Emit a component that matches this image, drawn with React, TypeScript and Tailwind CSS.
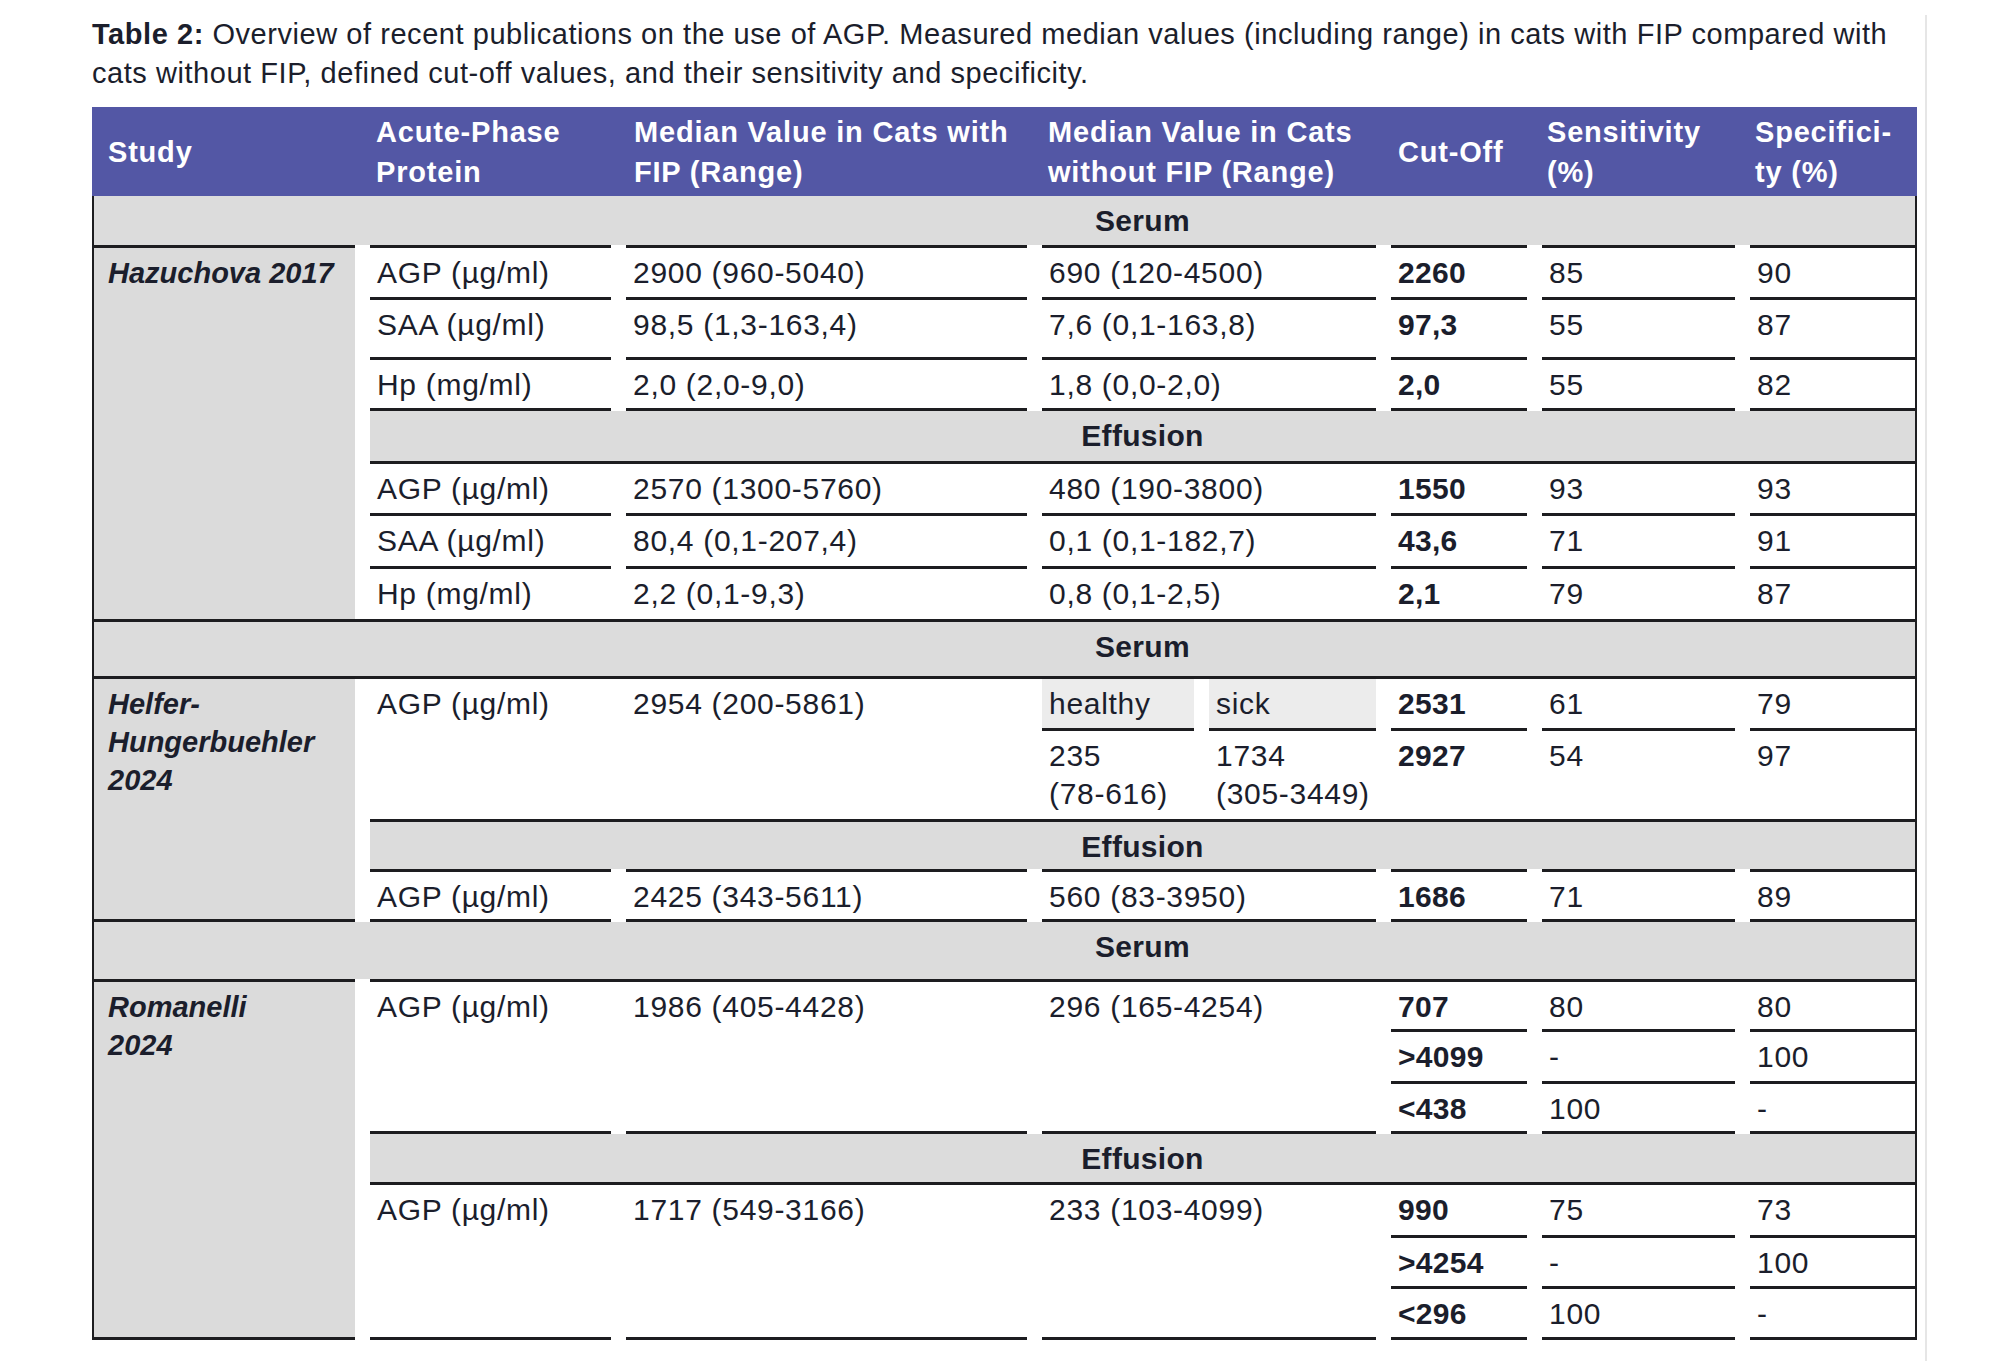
import React from 'react';

const rowGrid = 'grid grid-cols-[241px_401px_152px_167px_136px_193px_165px] gap-x-[15px]';
const ln = 'border-[#1d1d20]';

function Cell({ children, className = '' }: { children?: React.ReactNode; className?: string }) {
  return <div className={`pl-[7px] pt-[6px] ${className}`}>{children}</div>;
}

type RowProps = { h: string; values: string[]; top?: boolean; bottom?: boolean };

function DataRow({ h, values, top = false, bottom = true }: RowProps) {
  const b = `${top ? 'border-t-[3px]' : ''} ${bottom ? 'border-b-[3px]' : ''} ${ln}`;
  return (
    <div className={`${rowGrid} ${h}`}>
      <Cell className={b}>{values[0]}</Cell>
      <Cell className={b}>{values[1]}</Cell>
      <Cell className={`col-span-2 ${b}`}>{values[2]}</Cell>
      <Cell className={`font-bold tracking-[0.3px] ${b}`}>{values[3]}</Cell>
      <Cell className={b}>{values[4]}</Cell>
      <Cell className={b}>{values[5]}</Cell>
    </div>
  );
}

// gray band across the whole table, label centred over the data columns
function FullSection({ label, className = '' }: { label: string; className?: string }) {
  return (
    <div className={`flex bg-[#dcdcdc] ${className}`}>
      <div className="w-[276px] shrink-0" />
      <div className="flex-1 pt-[6px] text-center font-bold tracking-[0.3px]">{label}</div>
    </div>
  );
}

function Section({ label, className = '' }: { label: string; className?: string }) {
  return <div className={`bg-[#dcdcdc] pt-[6px] text-center font-bold tracking-[0.3px] ${className}`}>{label}</div>;
}

function Study({ children, className = '' }: { children: React.ReactNode; className?: string }) {
  return (
    <div className={`w-[261px] shrink-0 bg-[#dbdbdb] pl-[14px] pt-[6px] text-[29px] font-bold italic tracking-normal ${ln} ${className}`}>
      {children}
    </div>
  );
}

// three cut-off rows sharing one protein / median block
function CutoffGroup({ rows, heights, values }: { rows: string[][]; heights: string; values: string[] }) {
  const span = `row-span-3 border-b-[3px] ${ln}`;
  return (
    <div className={`${rowGrid} ${heights}`}>
      <Cell className={`row-start-1 col-start-1 ${span}`}>{values[0]}</Cell>
      <Cell className={`row-start-1 col-start-2 ${span}`}>{values[1]}</Cell>
      <Cell className={`row-start-1 col-start-3 col-span-2 ${span}`}>{values[2]}</Cell>
      {rows.map((r, i) => (
        <React.Fragment key={i}>
          <Cell className={`col-start-5 font-bold tracking-[0.3px] border-b-[3px] ${ln}`}>{r[0]}</Cell>
          <Cell className={`col-start-6 border-b-[3px] ${ln}`}>{r[1]}</Cell>
          <Cell className={`col-start-7 border-b-[3px] ${ln}`}>{r[2]}</Cell>
        </React.Fragment>
      ))}
    </div>
  );
}

export default function App() {
  return (
    <div className="min-h-[1361px] bg-white font-['Liberation_Sans',Arial,sans-serif] text-[#1b1e2c]">
      <div className="mt-[15px] h-[1346px] w-[1927px] border-r-2 border-[#e6e6e6] pl-[92px]">
        <p className="whitespace-nowrap text-[29px] leading-[39px] tracking-[0.55px]">
          <span className="font-bold">Table 2:</span> Overview of recent publications on the use of AGP. Measured median
          values (including range) in cats with FIP compared with
          <br />
          cats without FIP, defined cut-off values, and their sensitivity and specificity.
        </p>

        <div className="mt-[14px] w-[1825px] text-[30px] leading-[38px] tracking-[0.7px]">
          {/* header */}
          <div className="grid h-[89px] grid-cols-[261px_241px_401px_334px_136px_193px_165px] gap-x-[15px] bg-[#5357a5] px-[2px] text-[29px] font-bold leading-[40px] tracking-[0.8px] text-white">
            <div className="flex items-center pl-[14px]">Study</div>
            <div className="flex items-center pl-[6px]">
              Acute-Phase
              <br />
              Protein
            </div>
            <div className="flex items-center pl-[8px]">
              Median Value in Cats with
              <br />
              FIP (Range)
            </div>
            <div className="flex items-center pl-[6px]">
              Median Value in Cats
              <br />
              without FIP (Range)
            </div>
            <div className="flex items-center pl-[7px]">Cut-Off</div>
            <div className="flex items-center pl-[5px]">
              Sensitivity
              <br />
              (%)
            </div>
            <div className="flex items-center pl-[5px]">
              Specifici-
              <br />
              ty (%)
            </div>
          </div>

          <div className={`border-x-2 ${ln}`}>
            {/* Hazuchova 2017 */}
            <div className={`border-b-[3px] ${ln}`}>
              <FullSection label="Serum" className="h-[49px]" />
              <div className="flex gap-x-[15px]">
                <Study className="border-t-[3px]">Hazuchova 2017</Study>
                <div className="flex flex-1 flex-col">
                  <DataRow h="h-[55px]" top values={['AGP (µg/ml)', '2900 (960-5040)', '690 (120-4500)', '2260', '85', '90']} />
                  <DataRow h="h-[60px]" values={['SAA (µg/ml)', '98,5 (1,3-163,4)', '7,6 (0,1-163,8)', '97,3', '55', '87']} />
                  <DataRow h="h-[51px]" values={['Hp (mg/ml)', '2,0 (2,0-9,0)', '1,8 (0,0-2,0)', '2,0', '55', '82']} />
                  <Section label="Effusion" className={`h-[53px] border-b-[3px] ${ln}`} />
                  <DataRow h="h-[52px]" values={['AGP (µg/ml)', '2570 (1300-5760)', '480 (190-3800)', '1550', '93', '93']} />
                  <DataRow h="h-[53px]" values={['SAA (µg/ml)', '80,4 (0,1-207,4)', '0,1 (0,1-182,7)', '43,6', '71', '91']} />
                  <DataRow h="h-[50px]" bottom={false} values={['Hp (mg/ml)', '2,2 (0,1-9,3)', '0,8 (0,1-2,5)', '2,1', '79', '87']} />
                </div>
              </div>
            </div>

            {/* Helfer-Hungerbuehler 2024 */}
            <FullSection label="Serum" className={`h-[57px] border-b-[3px] ${ln}`} />
            <div className="flex gap-x-[15px]">
              <Study className="border-b-[3px]">
                Helfer-
                <br />
                Hungerbuehler
                <br />
                2024
              </Study>
              <div className="flex flex-1 flex-col">
                <div className={`${rowGrid} grid-rows-[52px_88px]`}>
                  <Cell className="row-span-2">AGP (µg/ml)</Cell>
                  <Cell className="row-span-2">2954 (200-5861)</Cell>
                  <Cell className={`bg-[#ececec] border-b-[3px] ${ln}`}>healthy</Cell>
                  <Cell className={`bg-[#ececec] border-b-[3px] ${ln}`}>sick</Cell>
                  <Cell className={`font-bold tracking-[0.3px] border-b-[3px] ${ln}`}>2531</Cell>
                  <Cell className={`border-b-[3px] ${ln}`}>61</Cell>
                  <Cell className={`border-b-[3px] ${ln}`}>79</Cell>
                  <Cell>
                    235
                    <br />
                    (78-616)
                  </Cell>
                  <Cell>
                    1734
                    <br />
                    (305-3449)
                  </Cell>
                  <Cell className="font-bold tracking-[0.3px]">2927</Cell>
                  <Cell>54</Cell>
                  <Cell>97</Cell>
                </div>
                <Section label="Effusion" className={`h-[50px] border-t-[3px] ${ln}`} />
                <DataRow h="h-[53px]" top values={['AGP (µg/ml)', '2425 (343-5611)', '560 (83-3950)', '1686', '71', '89']} />
              </div>
            </div>

            {/* Romanelli 2024 */}
            <FullSection label="Serum" className="h-[57px]" />
            <div className="flex gap-x-[15px]">
              <Study className="border-y-[3px]">
                Romanelli
                <br />
                2024
              </Study>
              <div className="flex flex-1 flex-col">
                <div className={`border-t-[3px] ${ln}`}>
                  <CutoffGroup
                    heights="grid-rows-[50px_52px_50px]"
                    values={['AGP (µg/ml)', '1986 (405-4428)', '296 (165-4254)']}
                    rows={[
                      ['707', '80', '80'],
                      ['>4099', '-', '100'],
                      ['<438', '100', '-'],
                    ]}
                  />
                </div>
                <Section label="Effusion" className={`h-[51px] border-b-[3px] ${ln}`} />
                <CutoffGroup
                  heights="grid-rows-[53px_51px_51px]"
                  values={['AGP (µg/ml)', '1717 (549-3166)', '233 (103-4099)']}
                  rows={[
                    ['990', '75', '73'],
                    ['>4254', '-', '100'],
                    ['<296', '100', '-'],
                  ]}
                />
              </div>
            </div>
          </div>
        </div>
      </div>
    </div>
  );
}
